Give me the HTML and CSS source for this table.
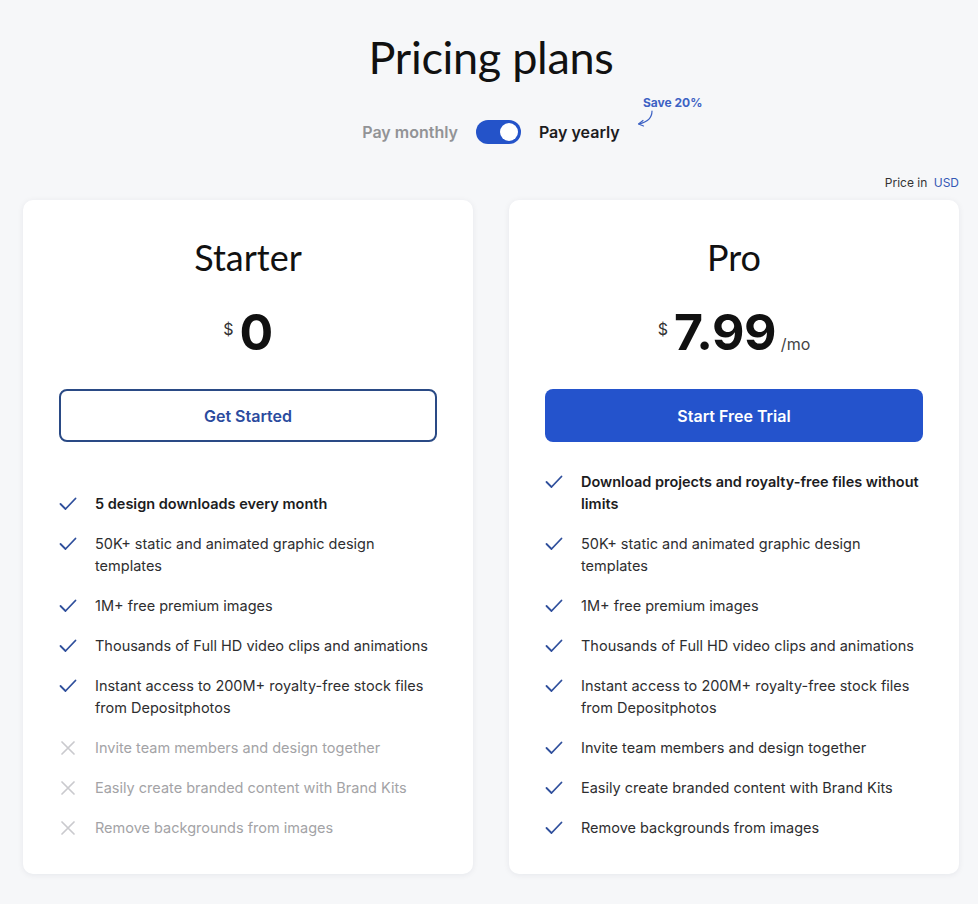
FILE: index.html
```html
<!DOCTYPE html>
<html lang="en">
<head>
<meta charset="utf-8">
<title>Pricing plans</title>
<link rel="stylesheet" href="styles.css">
</head>
<body>
<main class="page">
  <h1 class="title">Pricing plans</h1>
  <div class="billing">
    <span class="billing-opt billing-opt--off">Pay monthly</span>
    <span class="switch"><span class="switch-knob"></span></span>
    <span class="billing-opt billing-opt--on">Pay yearly
      <span class="save">Save 20%</span>
      <svg class="save-arrow" width="22" height="20" viewBox="0 0 22 20" fill="none" stroke="#3d62c4" stroke-width="1.2" stroke-linecap="round" stroke-linejoin="round">
        <path d="M17 1 C17 7 13 12 4 14"/>
        <path d="M8 10.5 L3.5 14 L8.5 16"/>
      </svg>
    </span>
  </div>
  <div class="currency">Price in <span class="currency-code">USD</span></div>

  <div class="plans">
    <section class="card">
      <h2 class="card-title">Starter</h2>
      <div class="price"><span class="price-cur">$</span><span class="price-num">0</span></div>
      <button class="btn btn--outline">Get Started</button>
      <ul class="features">
        <li class="feat feat--strong"><svg class="ic-check" viewBox="0 0 18 14"><path d="M1.5 7 L6.5 12 L16.5 1.5"/></svg><span>5 design downloads every month</span></li>
        <li class="feat"><svg class="ic-check" viewBox="0 0 18 14"><path d="M1.5 7 L6.5 12 L16.5 1.5"/></svg><span>50K+ static and animated graphic design templates</span></li>
        <li class="feat"><svg class="ic-check" viewBox="0 0 18 14"><path d="M1.5 7 L6.5 12 L16.5 1.5"/></svg><span>1M+ free premium images</span></li>
        <li class="feat"><svg class="ic-check" viewBox="0 0 18 14"><path d="M1.5 7 L6.5 12 L16.5 1.5"/></svg><span>Thousands of Full HD video clips and animations</span></li>
        <li class="feat"><svg class="ic-check" viewBox="0 0 18 14"><path d="M1.5 7 L6.5 12 L16.5 1.5"/></svg><span>Instant access to 200M+ royalty-free stock files from Depositphotos</span></li>
        <li class="feat feat--off"><svg class="ic-x" viewBox="0 0 14 14"><path d="M1 1 L13 13 M13 1 L1 13"/></svg><span>Invite team members and design together</span></li>
        <li class="feat feat--off"><svg class="ic-x" viewBox="0 0 14 14"><path d="M1 1 L13 13 M13 1 L1 13"/></svg><span>Easily create branded content with Brand Kits</span></li>
        <li class="feat feat--off"><svg class="ic-x" viewBox="0 0 14 14"><path d="M1 1 L13 13 M13 1 L1 13"/></svg><span>Remove backgrounds from images</span></li>
      </ul>
    </section>

    <section class="card">
      <h2 class="card-title">Pro</h2>
      <div class="price"><span class="price-cur">$</span><span class="price-num">7.99</span><span class="price-per">/mo</span></div>
      <button class="btn btn--solid">Start Free Trial</button>
      <ul class="features">
        <li class="feat feat--strong"><svg class="ic-check" viewBox="0 0 18 14"><path d="M1.5 7 L6.5 12 L16.5 1.5"/></svg><span>Download projects and royalty-free files without limits</span></li>
        <li class="feat"><svg class="ic-check" viewBox="0 0 18 14"><path d="M1.5 7 L6.5 12 L16.5 1.5"/></svg><span>50K+ static and animated graphic design templates</span></li>
        <li class="feat"><svg class="ic-check" viewBox="0 0 18 14"><path d="M1.5 7 L6.5 12 L16.5 1.5"/></svg><span>1M+ free premium images</span></li>
        <li class="feat"><svg class="ic-check" viewBox="0 0 18 14"><path d="M1.5 7 L6.5 12 L16.5 1.5"/></svg><span>Thousands of Full HD video clips and animations</span></li>
        <li class="feat"><svg class="ic-check" viewBox="0 0 18 14"><path d="M1.5 7 L6.5 12 L16.5 1.5"/></svg><span>Instant access to 200M+ royalty-free stock files from Depositphotos</span></li>
        <li class="feat"><svg class="ic-check" viewBox="0 0 18 14"><path d="M1.5 7 L6.5 12 L16.5 1.5"/></svg><span>Invite team members and design together</span></li>
        <li class="feat"><svg class="ic-check" viewBox="0 0 18 14"><path d="M1.5 7 L6.5 12 L16.5 1.5"/></svg><span>Easily create branded content with Brand Kits</span></li>
        <li class="feat"><svg class="ic-check" viewBox="0 0 18 14"><path d="M1.5 7 L6.5 12 L16.5 1.5"/></svg><span>Remove backgrounds from images</span></li>
      </ul>
    </section>
  </div>
</main>
</body>
</html>
```

FILE: styles.css
```css
* { box-sizing: border-box; }
html, body { margin: 0; padding: 0; }
body {
  background: #f6f7f9;
  font-family: "Inter", "Liberation Sans", sans-serif;
  color: #222;
}
.page {
  padding: 27px 19px 30px 23px;
}
.title {
  margin: 0;
  text-align: center;
  font-family: "Lato", "Inter", sans-serif;
  font-weight: 400;
  font-size: 45px;
  line-height: 60px;
  color: #111;
  letter-spacing: -0.3px;
}
.billing {
  margin-top: 33px;
  display: flex;
  justify-content: center;
  align-items: center;
  gap: 18px;
  height: 24px;
  padding-left: 0;
}
.billing-opt {
  font-size: 16px;
  font-weight: 600;
  position: relative;
}
.billing-opt--off { color: #929396; }
.billing-opt--on { color: #1c1c1e; }
.switch {
  width: 45px;
  height: 24px;
  border-radius: 12px;
  background: #2453c9;
  display: flex;
  align-items: center;
  justify-content: flex-end;
  padding: 0 3px;
}
.switch-knob {
  width: 18px;
  height: 18px;
  border-radius: 50%;
  background: #fff;
}
.save {
  position: absolute;
  left: 104px;
  top: -27px;
  white-space: nowrap;
  font-size: 12px;
  font-weight: 700;
  color: #3d62c4;
}
.save-arrow {
  position: absolute;
  left: 96px;
  top: -12px;
}
.currency {
  margin-top: 30px;
  text-align: right;
  font-size: 12px;
  color: #333;
  line-height: 18px;
}
.currency-code { color: #3557b5; margin-left: 3px; }
.plans {
  margin-top: 8px;
  display: grid;
  grid-template-columns: 1fr 1fr;
  gap: 36px;
}
.card {
  background: #fff;
  border-radius: 10px;
  box-shadow: 0 1px 6px rgba(20, 30, 60, 0.07);
  padding: 34px 36px 35px;
  display: flex;
  flex-direction: column;
}
.card-title {
  margin: 0;
  text-align: center;
  font-family: "Lato", "Inter", sans-serif;
  font-weight: 400;
  font-size: 36px;
  line-height: 46px;
  color: #111;
}
.price {
  margin-top: 24px;
  display: flex;
  justify-content: center;
  align-items: baseline;
  height: 56px;
}
.price-cur {
  font-size: 16px;
  color: #333;
  margin-right: 6px;
  align-self: flex-start;
  margin-top: 15px;
}
.price-num {
  font-size: 50px;
  font-weight: 700;
  line-height: 56px;
  color: #111;
  letter-spacing: -0.5px;
}
.price-per {
  font-size: 16px;
  color: #444;
  margin-left: 5px;
}
.btn {
  margin-top: 29px;
  height: 53px;
  width: 100%;
  border-radius: 8px;
  font-family: inherit;
  font-size: 16px;
  font-weight: 600;
  cursor: pointer;
}
.btn--outline {
  background: #fff;
  border: 2px solid #2a4a85;
  color: #2b4b9e;
}
.btn--solid {
  background: #2453cc;
  border: none;
  color: #fff;
}
.features {
  list-style: none;
  margin: auto 0 0;
  padding: 29px 0 0;
  display: flex;
  flex-direction: column;
  gap: 18px;
}
.feat {
  display: flex;
  align-items: flex-start;
  gap: 18px;
  font-size: 14.5px;
  line-height: 22px;
  color: #2e2e30;
}
.feat span { flex: 1; }
.feat--strong { font-weight: 600; color: #1c1c1e; }
.feat--off { color: #a3a3a6; }
.ic-check {
  flex: none;
  width: 18px;
  height: 14px;
  margin-top: 4px;
  fill: none;
  stroke: #2f4f9c;
  stroke-width: 1.8;
  stroke-linecap: round;
  stroke-linejoin: round;
}
.ic-x {
  flex: none;
  width: 14px;
  height: 14px;
  margin: 4px 2px 0 2px;
  fill: none;
  stroke: #cacace;
  stroke-width: 1.7;
  stroke-linecap: round;
}
```
